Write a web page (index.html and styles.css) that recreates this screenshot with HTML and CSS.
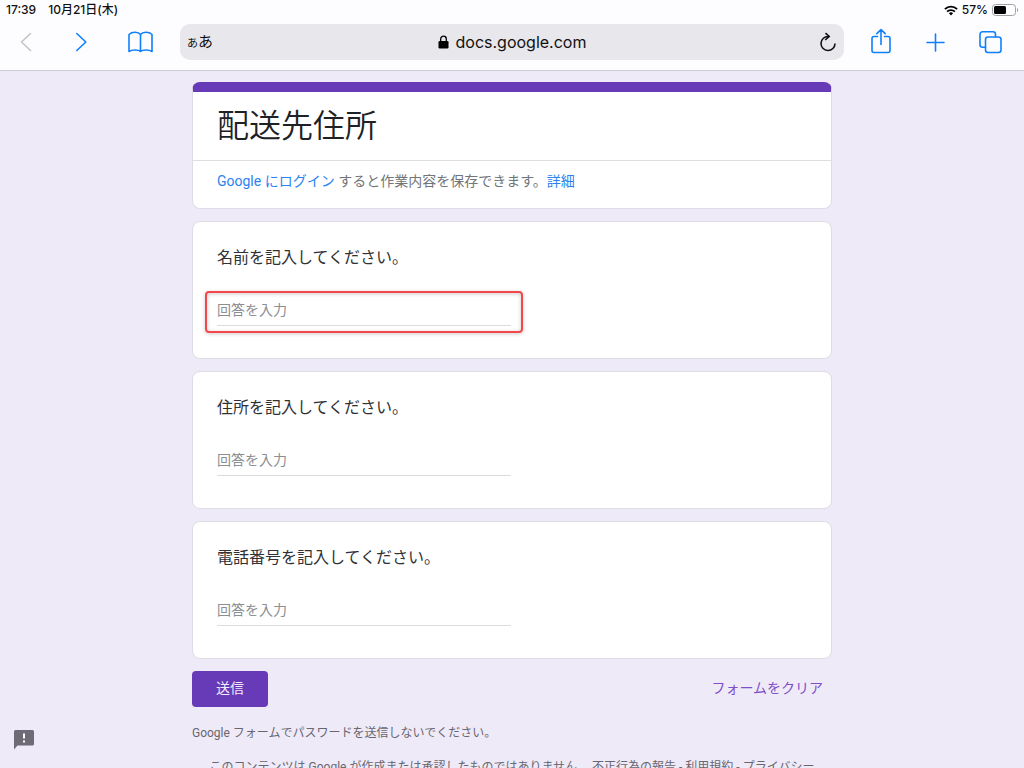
FILE: index.html
```html
<!DOCTYPE html>
<html lang="ja">
<head>
<meta charset="utf-8">
<meta name="viewport" content="width=device-width, initial-scale=1">
<title>配送先住所</title>
<link rel="stylesheet" href="styles.css">
</head>
<body>
<header class="browser">
  <div class="status">
    <span>17:39</span>
    <span>10月21日(木)</span>
    <span class="status-right">
      <svg class="wifi" viewBox="0 0 14 11" aria-hidden="true"><g fill="none" stroke="#000" stroke-width="1.9"><path d="M.9 4.1a8.7 8.7 0 0 1 12.2 0"/><path d="M3.1 6.7a5.5 5.5 0 0 1 7.8 0"/></g><path d="M4.9 8.3a3 3 0 0 1 4.2 0L7 10.6z"/></svg>
      <span>57%</span>
      <svg class="battery" viewBox="0 0 27 12" aria-hidden="true"><rect x=".5" y=".5" width="23" height="11" rx="3" fill="none" stroke="#a0a0a3"/><rect x="2" y="2" width="12" height="8" rx="1.5"/><path d="M25 4c1.600.6 1.600 3.400 0 4z" fill="#a0a0a3"/></svg>
    </span>
  </div>
  <nav class="toolbar">
    <div class="tools tools-left">
      <button class="tool" disabled aria-label="戻る"><svg viewBox="0 0 28 28"><path d="M18.500 5.500 9.500 14l9 8.500"/></svg></button>
      <button class="tool" aria-label="進む"><svg viewBox="0 0 28 28"><path d="M9.800 5.500 18.800 14l-9 8.500"/></svg></button>
      <button class="tool book" aria-label="ブックマーク"><svg viewBox="0 0 28 28"><path d="M14.500 6.500C12.500 3.700 6 3.500 3 6.500V23.500c3-2 9.500-1.800 11.500 0 2-1.800 8.500-2 11.500 0V6.500c-3-3-9.500-2.800-11.500 0zM14.500 6.500v17"/></svg></button>
    </div>
    <div class="address">
      <button class="reader" aria-label="表示設定"><span class="small-kana">あ</span>あ</button>
      <button class="domain"><svg class="lock" viewBox="0 0 11 14" aria-hidden="true"><rect x=".5" y="6" width="10" height="7.500" rx="1.200"/><path d="M2.700 6.500V4a2.800 2.800 0 0 1 5.600 0v2.500" fill="none" stroke="#000" stroke-width="1.300"/></svg>docs.google.com</button>
      <button class="reload" aria-label="再読み込み"><svg viewBox="0 0 20 20"><path d="M11.500 4.500A7 7 0 1 0 18 11.500M8.500 1.200l3.700 3.300-4 3.500" fill="none" stroke="#111" stroke-width="1.600"/></svg></button>
    </div>
    <div class="tools tools-right">
      <button class="tool" aria-label="共有"><svg viewBox="0 0 28 28"><path d="M10.500 8.500H7A2 2 0 0 0 5 10.500v12a2 2 0 0 0 2 2h14a2 2 0 0 0 2-2v-12a2 2 0 0 0-2-2h-3.500M14 16.500V2M9.800 5.700 14 1.700l4.200 4"/></svg></button>
      <button class="tool" aria-label="新規タブ"><svg viewBox="0 0 28 28"><path d="M5 14.500h17M13.500 6v17"/></svg></button>
      <button class="tool" aria-label="タブ一覧"><svg viewBox="0 0 28 28"><rect x="8.500" y="9" width="15.500" height="15.500" rx="2.500"/><path d="M8.500 19.300H5.500A2.500 2.500 0 0 1 3 16.800V6.300a2.500 2.500 0 0 1 2.500-2.500H16a2.500 2.500 0 0 1 2.500 2.500V9"/></svg></button>
    </div>
  </nav>
</header>
<main class="page">
  <form class="form">
    <section class="card intro">
      <h1 class="title">配送先住所</h1>
      <p class="login"><a href="#">Google にログイン</a> すると作業内容を保存できます。<a href="#">詳細</a></p>
    </section>
    <section class="card question">
      <label class="label" for="name">名前を記入してください。</label>
      <div class="field highlight"><input class="answer" id="name" type="text" placeholder="回答を入力"></div>
    </section>
    <section class="card question">
      <label class="label" for="address">住所を記入してください。</label>
      <div class="field"><input class="answer" id="address" type="text" placeholder="回答を入力"></div>
    </section>
    <section class="card question">
      <label class="label" for="phone">電話番号を記入してください。</label>
      <div class="field"><input class="answer" id="phone" type="text" placeholder="回答を入力"></div>
    </section>
    <div class="actions">
      <button class="submit" type="submit">送信</button>
      <button class="clear" type="reset">フォームをクリア</button>
    </div>
    <footer class="footer">
      <p class="warning">Google フォームでパスワードを送信しないでください。</p>
      <p class="legal">このコンテンツは Google が作成または承認したものではありません。 <a href="#">不正行為の報告</a> - <a href="#">利用規約</a> - <a href="#">プライバシー</a></p>
    </footer>
  </form>
  <button class="report" aria-label="問題を報告"><svg viewBox="0 0 22 22"><path d="M2.500 1h17a1.500 1.500 0 0 1 1.500 1.500v12.500a1.500 1.500 0 0 1-1.500 1.500H4.500L1 20.500V2.500A1.500 1.500 0 0 1 2.500 1z" fill="#6f6b76"/><path d="M10 4.500h2v5h-2zM10 11.500h2v2h-2z" fill="#fff"/></svg></button>
</main>
</body>
</html>
```
FILE: styles.css
```css
* { box-sizing: border-box; }

body {
  margin: 0;
  height: 100vh;
  display: flex;
  flex-direction: column;
  overflow: hidden;
  background: #eeeaf8;
  color: #303134;
  font-family: Roboto, "Noto Sans CJK JP", sans-serif;
}

h1, p { margin: 0; }
a { color: #2b83f0; text-decoration: none; }
svg { display: block; }

button {
  padding: 0;
  border: 0;
  background: none;
  color: inherit;
  font: inherit;
}

.browser {
  flex: none;
  padding-bottom: 10px;
  background: #fdfdff;
  border-bottom: 1px solid #cfccd6;
  color: #111;
  font-family: Inter, "Noto Sans CJK JP", sans-serif;
}

.status {
  display: flex;
  align-items: center;
  gap: 12px;
  height: 20px;
  padding: 0 5px 0 6px;
  font-size: 12px;
  font-weight: 500;
  line-height: 20px;
}

.status-right {
  display: flex;
  align-items: center;
  gap: 4px;
  margin-left: auto;
}

.wifi { width: 14px; height: 11px; }
.battery { width: 27px; height: 12px; }

.toolbar {
  display: flex;
  align-items: center;
  padding-top: 4px;
}

.tools {
  display: flex;
  gap: 27px;
  width: 180px;
  flex: none;
}

.tools-left { padding-left: 12px; }
.tools-right { justify-content: flex-end; padding-right: 19px; }

.tool { width: 28px; height: 28px; }
.book { margin-left: 4px; }

.tool svg {
  width: 28px;
  height: 28px;
  fill: none;
  stroke: #0f80fb;
  stroke-width: 1.6;
  stroke-linecap: round;
  stroke-linejoin: round;
}

.tool:disabled svg { stroke: #c4c4c8; }

.address {
  flex: 1;
  display: grid;
  grid-template-columns: 1fr auto 1fr;
  align-items: center;
  height: 36px;
  padding: 0 7px;
  border-radius: 10px;
  background: #e8e7eb;
}

.reader {
  justify-self: start;
  font-size: 15px;
  line-height: 24px;
}

.small-kana { font-size: 11px; }

.domain {
  display: flex;
  align-items: center;
  gap: 7px;
  font-size: 16px;
  line-height: 24px;
}

.lock { width: 11px; height: 14px; }
.reload { justify-self: end; }
.reload svg { width: 20px; height: 20px; }

.page {
  flex: 1;
  min-height: 0;
  overflow: hidden;
  padding: 11px 16px 0;
}

.form {
  display: flex;
  flex-direction: column;
  gap: 12px;
  max-width: 640px;
  margin: 0 auto;
}

.card {
  border: 1px solid #dddbe3;
  border-radius: 8px;
  background: #fff;
}

.intro {
  border-top: 10px solid #673ab7;
}

.title {
  padding: 10px 24px;
  border-bottom: 1px solid #dcdde0;
  color: #202124;
  font-size: 32px;
  font-weight: 350;
  line-height: 48px;
}

.login {
  padding: 10px 24px 17px;
  color: #70757a;
  font-size: 14px;
  line-height: 20px;
}

.question { padding: 24px 12px 25px; }

.label {
  display: block;
  padding: 0 12px;
  font-size: 16px;
  line-height: 24px;
}

.field {
  width: 318px;
  max-width: 100%;
  margin-top: 21px;
  padding: 5px 10px;
  border: 2px solid transparent;
  border-radius: 4px;
}

.highlight {
  border-color: #f4474a;
  box-shadow: 0 1px 4px rgba(0, 0, 0, 0.2), inset 0 1px 4px rgba(0, 0, 0, 0.2);
}

.answer {
  display: block;
  width: 100%;
  height: 28px;
  padding: 0 0 3px;
  border: 0;
  border-bottom: 1px solid #dcdcdf;
  background: none;
  color: #202124;
  font: inherit;
  font-size: 14px;
}

.answer::placeholder { color: #8b8e92; opacity: 1; }

.actions {
  display: flex;
  align-items: center;
  justify-content: space-between;
  font-size: 14px;
  line-height: 20px;
}

.submit {
  padding: 7px 24px 9px;
  border-radius: 4px;
  background: #673ab7;
  color: #f1ebfa;
}

.clear {
  padding: 7px 9px 9px;
  color: #7e50c8;
}

.footer {
  padding-top: 4px;
  color: #69666f;
  font-size: 12px;
  line-height: 20px;
}

.footer a { color: inherit; }

.legal {
  padding: 14px 16px 0;
  text-align: center;
}

.report {
  position: absolute;
  left: 13px;
  bottom: 17px;
}

.report svg { width: 22px; height: 22px; }
```
